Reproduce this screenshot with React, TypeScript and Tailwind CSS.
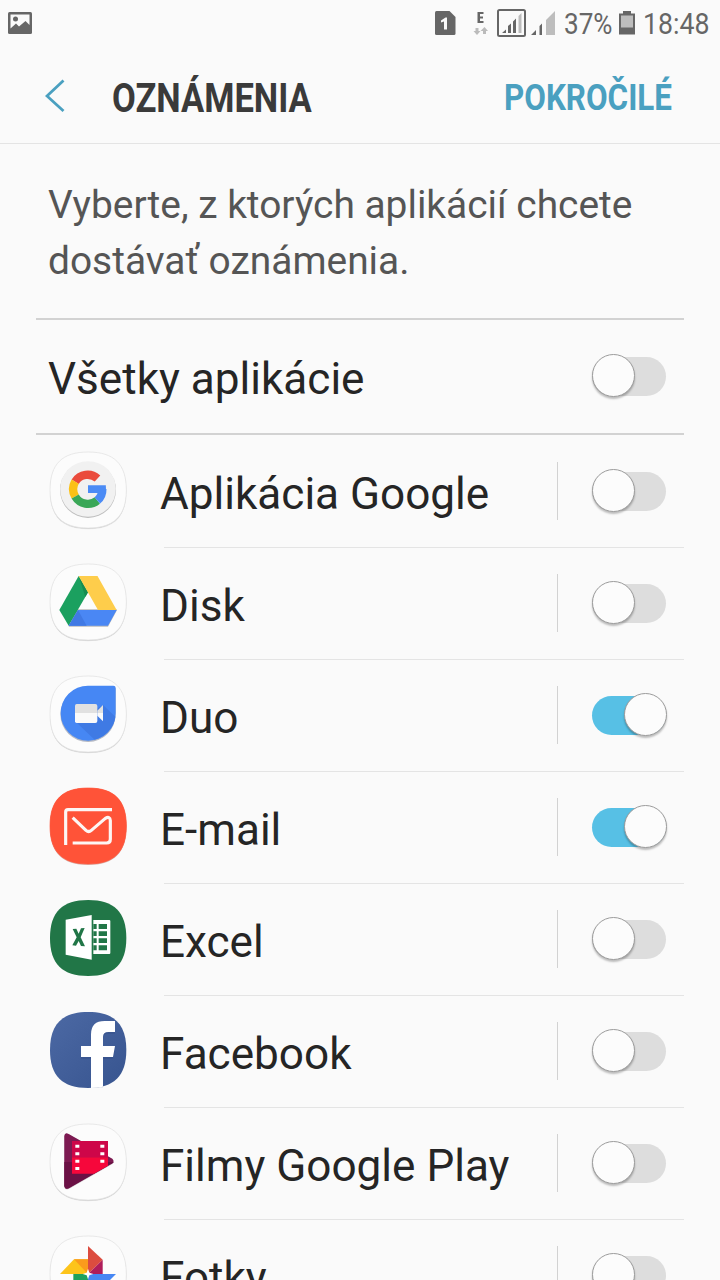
import type { ReactNode } from "react";
import clsx from "clsx";

const SQUIRCLE =
  "M174.5 36C252 36 289 72 289 150S252 264 174.5 264S60 228 60 150S97 36 174.5 36Z";

function AppIcon({
  fill = "#fcfcfc",
  plain = false,
  children,
}: {
  fill?: string;
  plain?: boolean;
  children: ReactNode;
}) {
  return (
    <svg viewBox="54 30 240 240" className="h-20 w-20 shrink-0">
      {plain && (
        <>
          <path d={SQUIRCLE} fill="#000" opacity="0.08" transform="translate(0 4)" />
          <path d={SQUIRCLE} fill="#000" opacity="0.12" transform="translate(0 2)" />
        </>
      )}
      <path
        d={SQUIRCLE}
        fill={fill}
        stroke={plain ? "#e4e4e4" : "none"}
        strokeWidth="2.5"
      />
      {children}
    </svg>
  );
}

function GoogleIcon() {
  return (
    <AppIcon plain>
      <circle cx="174" cy="150" r="84" fill="#bdbdbd" />
      <circle cx="174" cy="147" r="83.5" fill="#f1f1f1" />
      <g fill="none" strokeWidth="25">
        <path d="M202.500 115.500A44.500 44.500 0 0 0 135.500 125" stroke="#ea4b3c" />
        <path d="M135.500 125A44.500 44.500 0 0 0 135.500 169.500" stroke="#fbc116" />
        <path d="M135.500 169.500A44.500 44.500 0 0 0 202 181.500" stroke="#3aa757" />
        <path d="M202 181.500A44.500 44.500 0 0 0 217 147" stroke="#4b8bf5" />
      </g>
      <path d="M174 136H227.500L228 150L222 159H174Z" fill="#4b8bf5" />
    </AppIcon>
  );
}

function DriveIcon() {
  return (
    <AppIcon plain>
      <path d="M116 224H234L260 176V172H140Z" fill="#bbb" />
      <path d="M146 72L174 121L116 221.500L88 174Z" fill="#1ba05f" />
      <path d="M146 72L174 121L166 135Z" fill="#168c50" />
      <path d="M146 72H202.500L260 174H204Z" fill="#fecd4b" />
      <path d="M144 174H260L234 221.500H116Z" fill="#4a87f4" />
      <path d="M144 174L170 221.500H116Z" fill="#4079e4" />
    </AppIcon>
  );
}

function DuoIcon() {
  return (
    <AppIcon plain>
      <path d="M174 68H250Q257 68 257 75V150A83 83 0 1 1 174 68Z" fill="#b5b9c4" />
      <path d="M174 65H250Q257 65 257 72V147A82.500 82.500 0 1 1 174 65Z" fill="#4687f4" />
      <path d="M219 123L256 158A83 83 0 0 1 194 227L138 174Z" fill="#3f7ae4" />
      <path d="M140 120H196Q202 120 202 126V147H135V125Q135 120 140 120Z" fill="#e1e1e1" />
      <path d="M135 147H202V171Q202 177 196 177H140Q135 177 135 172Z" fill="#fafafa" />
      <path d="M219 123V147H202V140Z" fill="#e1e1e1" />
      <path d="M219 172V147H202V155Z" fill="#fafafa" />
    </AppIcon>
  );
}

function EmailIcon() {
  return (
    <AppIcon fill="#ff5338">
      <path d={SQUIRCLE} fill="#d8b8b2" transform="translate(0 3)" />
      <path d={SQUIRCLE} fill="#ff5338" stroke="#ff5338" strokeWidth="2" />
      <g fill="none" stroke="#fdf6f4" strokeWidth="9.500">
        <path d="M107 207V108Q107 101 114 101H246" />
        <path
          d="M128 125L168 163Q176 170 184 163L226 127Q240 119 241 134V190Q241 201 230 201H128"
          strokeLinejoin="round"
        />
      </g>
    </AppIcon>
  );
}

function ExcelIcon() {
  return (
    <AppIcon fill="#217647">
      <path d="M107 95L185 81V215L107 200Z" fill="#fff" />
      <path d="M190 96H238Q241 96 241 99V195Q241 198 238 198H190Z" fill="#fff" />
      <g fill="#217647">
        <path d="M190 108H200V123H190ZM190 130H200V144H190ZM190 151H200V165H190ZM190 172H200V187H190Z" />
        <path d="M206 108H231V123H206ZM206 130H231V144H206ZM206 151H231V165H206ZM206 172H231V187H206Z" />
        <path d="M128 123L139 122L146 137L153 121L164 120L152 148L165 175L153 174L146 159L138 173L127 172L140 148Z" />
      </g>
    </AppIcon>
  );
}

function FacebookIcon() {
  return (
    <AppIcon fill="url(#fb)">
      <defs>
        <linearGradient id="fb" x1="0" y1="0" x2="1" y2="1">
          <stop offset="0" stopColor="#4c69a4" />
          <stop offset="1" stopColor="#37548f" />
        </linearGradient>
      </defs>
      <path
        d="M183 262V176H153V142H183V108Q183 68 224 68H255V101H235Q219 101 219 116V142H255L249 176H219V262Z"
        fill="#2d4781"
        opacity="0.35"
      />
      <path
        d="M183 264V171H153V138H183V103Q183 63 224 63H255V96H235Q219 96 219 111V138H255L249 171H219V260Q202 264 183 264Z"
        fill="#fff"
      />
    </AppIcon>
  );
}

function MoviesIcon() {
  return (
    <AppIcon plain>
      <path d="M103 74Q104 61 116 67L247 142Q254 149 247 156L116 231Q104 235 103 224Z" fill="#bdb3b8" />
      <path d="M103 72Q104 60 116 66L247 140Q254 147 247 154L116 229Q104 233 103 222Z" fill="#7d1a52" />
      <path d="M103 150H251Q251 152 247 154L116 229Q104 233 103 222Z" fill="#6b1145" />
      <path d="M126 87H234V136H126Z" fill="#ce0649" />
      <path d="M126 136H234V161L192 185H126Z" fill="#f6073b" />
      <path
        d="M136 98H148V107H136ZM136 121H148V130H136ZM136 143H148V152H136ZM136 165H148V174H136ZM211 98H223V107H211ZM211 121H223V130H211ZM211 143H223V152H211Z"
        fill="#fff"
      />
    </AppIcon>
  );
}

function PhotosIcon() {
  return (
    <AppIcon plain>
      <path d="M132 106H174V150H90Z" fill="#fdc41b" />
      <path d="M132 106H174V150Z" fill="#fb9b1c" />
      <path d="M174 66L218 107L174 150Z" fill="#dc4c3f" />
      <path d="M218 107V150H174Z" fill="#af1d5b" />
      <path d="M174 150H258L216 192H174Z" fill="#4687f4" />
      <path d="M130 150H174V234L130 192Z" fill="#1fa15d" />
      <path d="M174 134L178 146L190 150L178 154L174 166L170 154L158 150L170 146Z" fill="#fff" />
    </AppIcon>
  );
}

const apps = [
  { name: "Aplikácia Google", icon: <GoogleIcon />, enabled: false },
  { name: "Disk", icon: <DriveIcon />, enabled: false },
  { name: "Duo", icon: <DuoIcon />, enabled: true },
  { name: "E-mail", icon: <EmailIcon />, enabled: true },
  { name: "Excel", icon: <ExcelIcon />, enabled: false },
  { name: "Facebook", icon: <FacebookIcon />, enabled: false },
  { name: "Filmy Google Play", icon: <MoviesIcon />, enabled: false },
  { name: "Fotky", icon: <PhotosIcon />, enabled: false },
];

function Toggle({ enabled }: { enabled: boolean }) {
  return (
    <button
      role="switch"
      aria-checked={enabled}
      className={clsx(
        "flex h-[39px] w-[74px] shrink-0 items-center rounded-full",
        enabled ? "justify-end bg-[#57c0e5]" : "bg-[#dddddd]",
      )}
    >
      <span
        className={clsx(
          "-mt-[3px] h-[43px] w-[43px] shrink-0 rounded-full border border-[#9c9c9c] bg-[#fcfcfc] shadow-[0_2px_2px_rgba(0,0,0,0.25)]",
          enabled && "-mr-px",
        )}
      />
    </button>
  );
}

function StatusBar() {
  return (
    <div className="flex h-12 items-start justify-between text-[30px] leading-[48px] text-[#666666]">
      <svg viewBox="0 0 24 22" className="mt-3 ml-2 h-[22px] w-6">
        <rect width="24" height="22" rx="1.500" fill="#666" />
        <path d="M2.500 2.500H21.500V13L17.500 9L11 14.500L8 11.500L2.500 16.500Z" fill="#fafafa" />
        <circle cx="7.500" cy="7" r="2.500" fill="#666" />
      </svg>
      <div className="flex">
        <svg viewBox="435 0 125 48" className="h-12 w-[125px]">
          <path d="M436.500 11H449.500L455.500 17V33.500Q455.500 35 454 35H436.500Q435 35 435 33.500V12.500Q435 11 436.500 11Z" fill="#666" />
          <path d="M441 20.500L445.500 17.500H447V29.500H444V21.500L441 22.500Z" fill="#fafafa" />
          <path d="M477.500 12H483.500V14H480V16.500H483V18.500H480V21H483.500V23H477.500Z" fill="#666" />
          <path d="M475.500 28H478.500V31H480.500L477 35L473.500 31H475.500ZM483 34V31H480.500L484.500 27L488 31H486V34Z" fill="#bbb" />
          <rect x="498" y="10" width="27" height="26" rx="1.500" fill="none" stroke="#666" strokeWidth="2" />
          <path d="M502 33L506 29.500V33ZM508 33V26L511 23.500V33ZM513 33V21.500L516 18.500V33Z" fill="#666" />
          <path d="M518.500 33V16L521.500 13V33Z" fill="#bbb" />
          <path d="M531 35L536 30V35ZM539.500 35V26L542 23.500V35Z" fill="#666" />
          <path d="M546 35V20L555 11V35Z" fill="#bdbdbd" />
        </svg>
        <span className="w-[59px] pl-1">
          <span className="inline-block origin-left scale-x-[0.87]">37%</span>
        </span>
        <svg viewBox="0 0 16 24" className="mt-[11px] h-6 w-4">
          <path d="M4 0H12V2.500H16V23.500H0V2.500H4Z" fill="#666" />
          <rect x="2" y="4.500" width="12" height="12" fill="#bdbdbd" />
        </svg>
        <span className="w-[85px] pl-[8px]">
          <span className="inline-block origin-left scale-x-[0.89]">18:48</span>
        </span>
      </div>
    </div>
  );
}

export default function App() {
  return (
    <div className="h-[1280px] w-[720px] overflow-hidden bg-[#fafafa] font-[Roboto,sans-serif] text-[#252525]">
      <StatusBar />
      <header className="flex h-24 items-center border-b border-[#e4e4e4] pr-12 pl-[45px]">
        <svg viewBox="0 0 20 34" className="h-[34px] w-5">
          <path d="M18.500 1.500L2 17L18.500 32" fill="none" stroke="#4aa0c0" strokeWidth="2.800" />
        </svg>
        <h1 className="ml-[47px] w-[200px] pt-[7px] text-[41px] font-bold whitespace-nowrap text-[#3a3a3a]">
          <span className="inline-block origin-left scale-x-[0.842]">OZNÁMENIA</span>
        </h1>
        <button className="ml-auto w-[168px] pt-1 text-left text-[36px] font-bold whitespace-nowrap text-[#4aa0c0]">
          <span className="inline-block origin-left scale-x-[0.872]">POKROČILÉ</span>
        </button>
      </header>

      <main className="px-9">
        <p className="h-[174px] px-3 pt-[33px] text-[38.9px] leading-[56px] whitespace-nowrap text-[#555555]">
          Vyberte, z ktorých aplikácií chcete
          <br />
          dostávať oznámenia.
        </p>
        <div className="flex h-[117px] items-center justify-between border-y-2 border-[#d2d2d2] pr-[18px] pl-3">
          <span className="pt-[5px] text-[44.1px] leading-[66px]">Všetky aplikácie</span>
          <Toggle enabled={false} />
        </div>

        <ul className="pt-px">
          {apps.map((app) => (
            <li key={app.name} className="flex h-28 items-start pl-3">
              <div className="pt-[14px]">{app.icon}</div>
              <div className="ml-9 flex h-28 flex-1 items-center border-b border-[#e4e4e4]">
                <span className="-ml-1 pt-[5px] text-[44.1px] leading-[66px] whitespace-nowrap">
                  {app.name}
                </span>
                <span className="mr-[34px] mb-[2px] ml-auto h-[58px] w-px bg-[#d2d2d2]" />
                <span className="mr-[18px]">
                  <Toggle enabled={app.enabled} />
                </span>
              </div>
            </li>
          ))}
        </ul>
      </main>
    </div>
  );
}
